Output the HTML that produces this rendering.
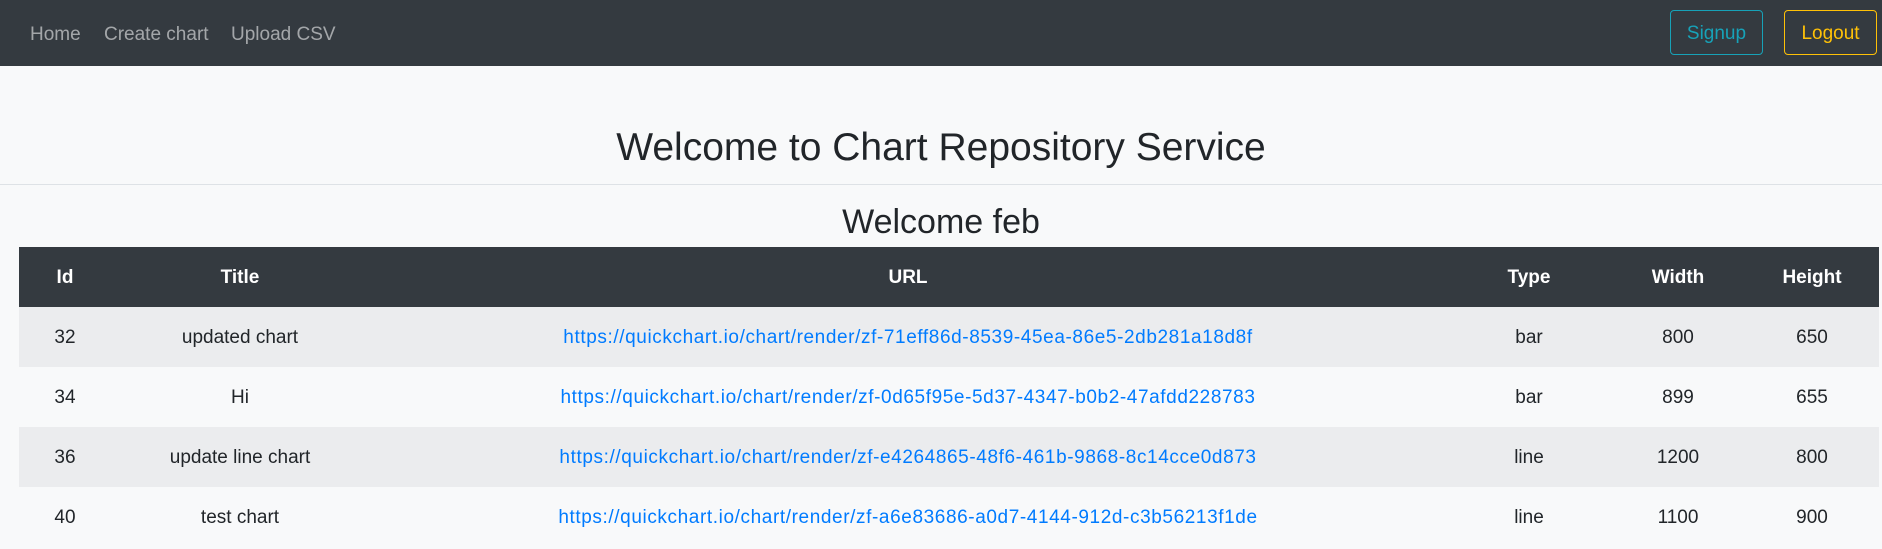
<!DOCTYPE html>
<html><head><meta charset="utf-8"><style>
*{box-sizing:border-box;margin:0;padding:0}
body{width:1882px;height:549px;background:#f8f9fa;font-family:"Liberation Sans",sans-serif;color:#212529;overflow:hidden;position:relative}
.nav{position:absolute;left:0;top:0;width:1882px;height:66px;background:#343a40}
.nl{position:absolute;top:24px;font-size:19px;color:rgba(255,255,255,.55)}
.btn{position:absolute;top:10px;height:45px;border:1px solid;border-radius:4px;font-size:19px;display:flex;align-items:center;justify-content:center;padding-top:2px}
h1{position:absolute;top:125px;left:0;width:1882px;text-align:center;font-weight:400;font-size:39px;line-height:46px}
.hr{position:absolute;top:184px;left:0;width:1882px;height:1px;background:#dee2e6}
h3{position:absolute;top:202px;left:0;width:1882px;text-align:center;font-weight:400;font-size:34px;line-height:40px}
.row{position:absolute;left:19px;width:1860px;height:60px;display:grid;grid-template-columns:92px 258px 1078px 164px 134px 134px;align-items:center;text-align:center;font-size:19px;padding-top:2px}
.hd{background:#343a40;color:#fff;font-weight:bold}
.s{background:#ebecee}
a{color:#007bff;text-decoration:none;letter-spacing:0.6px}
</style></head><body>
<div class="nav">
<span class="nl" style="left:30px">Home</span>
<span class="nl" style="left:104px">Create chart</span>
<span class="nl" style="left:231px">Upload CSV</span>
<div class="btn" style="left:1670px;width:93px;color:#17a2b8;border-color:#17a2b8">Signup</div>
<div class="btn" style="left:1784px;width:93px;color:#ffc107;border-color:#ffc107">Logout</div>
</div>
<h1>Welcome to Chart Repository Service</h1>
<div class="hr"></div>
<h3>Welcome feb</h3>
<div class="row hd" style="top:247px"><div>Id</div><div>Title</div><div>URL</div><div>Type</div><div>Width</div><div>Height</div></div>
<div class="row s" style="top:307px"><div>32</div><div>updated chart</div><div><a>https://quickchart.io/chart/render/zf-71eff86d-8539-45ea-86e5-2db281a18d8f</a></div><div>bar</div><div>800</div><div>650</div></div>
<div class="row" style="top:367px"><div>34</div><div>Hi</div><div><a>https://quickchart.io/chart/render/zf-0d65f95e-5d37-4347-b0b2-47afdd228783</a></div><div>bar</div><div>899</div><div>655</div></div>
<div class="row s" style="top:427px"><div>36</div><div>update line chart</div><div><a>https://quickchart.io/chart/render/zf-e4264865-48f6-461b-9868-8c14cce0d873</a></div><div>line</div><div>1200</div><div>800</div></div>
<div class="row" style="top:487px"><div>40</div><div>test chart</div><div><a>https://quickchart.io/chart/render/zf-a6e83686-a0d7-4144-912d-c3b56213f1de</a></div><div>line</div><div>1100</div><div>900</div></div>
</body></html>
